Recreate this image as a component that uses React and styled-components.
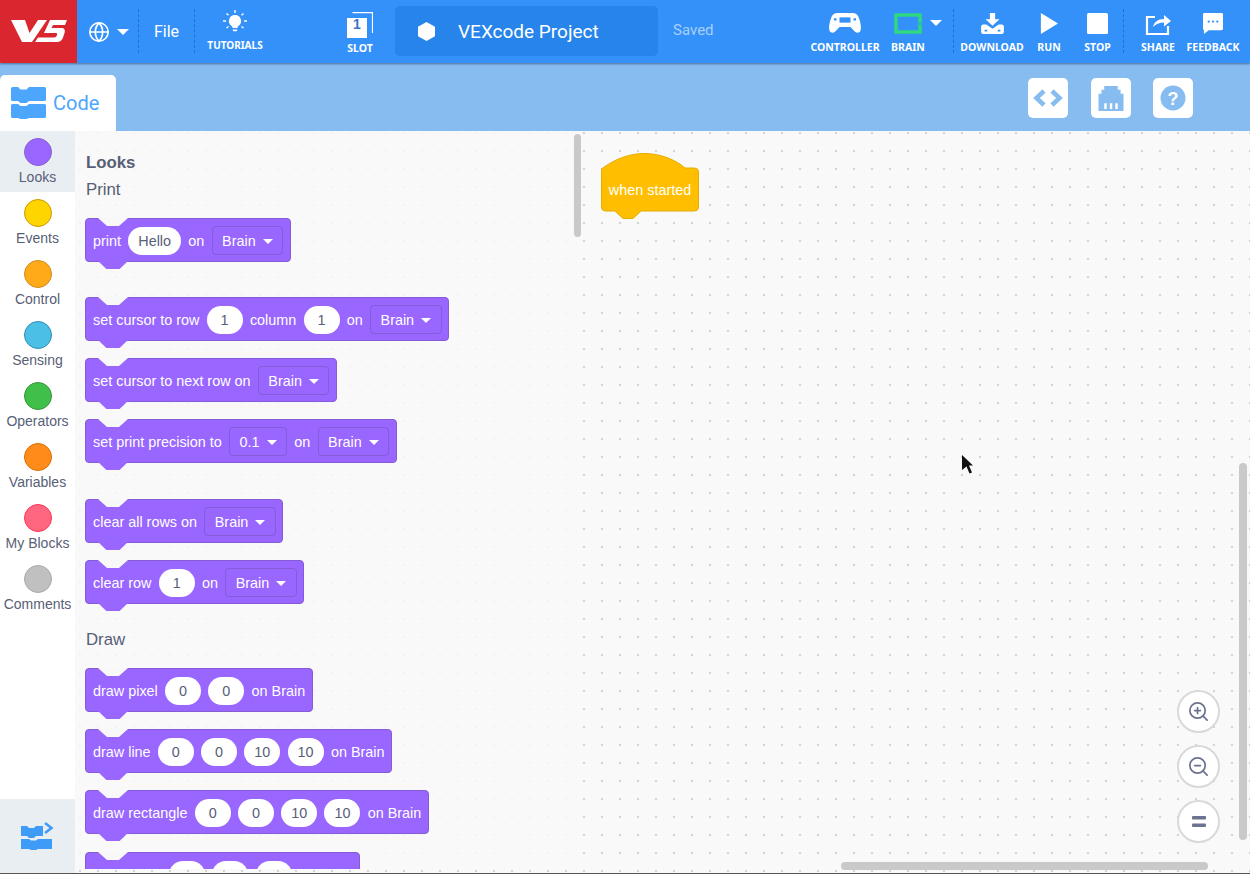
import React from "react";
import styled, { createGlobalStyle } from "styled-components";
import { Globe, ZoomIn, ZoomOut } from "lucide-react";

const GlobalStyle = createGlobalStyle`
  html, body {
    margin: 0;
    padding: 0;
    background: #f9f9f9;
  }
  * {
    box-sizing: border-box;
  }
`;

const Page = styled.div`
  width: 1250px;
  height: 874px;
  display: flex;
  flex-direction: column;
  overflow: hidden;
  font-family: "Liberation Sans", Arial, sans-serif;
  border-bottom: 1px solid #555;
`;

const Header = styled.header`
  height: 63px;
  flex: none;
  display: flex;
  align-items: stretch;
  background: #3391f9;
  color: #fff;
  position: relative;
  z-index: 2;
  box-shadow: 0 1px 2px rgba(40, 60, 90, 0.6);
`;

const Logo = styled.div`
  width: 77px;
  background: #da262e;
  display: flex;
`;

const LangMenu = styled.div`
  width: 61px;
  display: flex;
  align-items: center;
  padding-left: 11px;
  gap: 7px;
`;

const Caret = styled.span`
  display: block;
  width: 0;
  height: 0;
  border-left: 6px solid transparent;
  border-right: 6px solid transparent;
  border-top: 6px solid ${(p) => p.$color || "#fff"};
  margin-left: ${(p) => p.$left || 0}px;
  margin-right: ${(p) => p.$right || 0}px;
  margin-top: ${(p) => p.$top || 0}px;
`;

const Sep = styled.div`
  width: 1px;
  flex: none;
  margin: 9px ${(p) => p.$after || 0}px 10px 0;
  border-left: 1px dashed #2271c9;
`;

const FileMenu = styled.div`
  width: 55px;
  display: flex;
  align-items: center;
  justify-content: center;
  font-family: Roboto, sans-serif;
  font-size: 16px;
  padding-bottom: 1px;
`;

const ToolItem = styled.div`
  width: ${(p) => p.$w}px;
  flex: none;
  display: flex;
  flex-direction: column;
  align-items: center;
  justify-content: flex-end;
  padding-bottom: ${(p) => p.$pb ?? 10}px;
  margin-left: ${(p) => p.$left || 0}px;
  svg {
    flex: none;
  }
`;

const ToolLabel = styled.span`
  font-family: "Noto Sans", "Open Sans", sans-serif;
  font-weight: 700;
  font-size: ${(p) => p.$size || 10.5}px;
  line-height: 12px;
  margin-top: ${(p) => p.$gap ?? 7}px;
  white-space: nowrap;
`;

const ProjectBox = styled.div`
  width: 263px;
  height: 50px;
  margin: 6px 0 0 5px;
  background: #2684ea;
  border-radius: 5px;
  display: flex;
  align-items: center;
  padding-left: 23px;
  gap: 23px;
  font-family: Roboto, sans-serif;
  font-size: 19px;
`;

const SavedText = styled.div`
  margin-left: 15px;
  display: flex;
  align-items: center;
  padding-bottom: 3px;
  font-family: Roboto, sans-serif;
  font-size: 15px;
  color: #a8cffa;
`;

const RightTools = styled.div`
  margin-left: auto;
  padding-right: 16px;
  display: flex;
  align-items: stretch;
`;

const TabBar = styled.div`
  height: 68px;
  flex: none;
  display: flex;
  align-items: flex-end;
  background: #87bcf0;
`;

const CodeTab = styled.div`
  width: 116px;
  height: 56px;
  background: #fff;
  border-radius: 5px 5px 0 0;
  display: flex;
  align-items: center;
  padding-left: 11px;
  gap: 7px;
  font-family: Roboto, sans-serif;
  font-size: 20px;
  color: #4ca6fc;
`;

const TabActions = styled.div`
  margin-left: auto;
  align-self: flex-start;
  margin-top: 15px;
  padding-right: 57px;
  display: flex;
  gap: 22px;
  & > :first-child {
    margin-right: 1px;
  }
`;

const ActionButton = styled.div`
  width: 40px;
  height: 40px;
  background: #fff;
  border-radius: 5px;
  display: flex;
  align-items: center;
  justify-content: center;
`;

const Body = styled.div`
  flex: 1;
  min-height: 0;
  display: flex;
`;

const Sidebar = styled.nav`
  width: 75px;
  flex: none;
  background: #fff;
  display: flex;
  flex-direction: column;
  position: relative;
  z-index: 1;
`;

const CategoryItem = styled.div`
  height: 61px;
  flex: none;
  display: flex;
  flex-direction: column;
  align-items: center;
  padding-top: 7px;
  background: ${(p) => (p.$active ? "#e9eef2" : "transparent")};
  color: #575e75;
  font-size: 14px;
  line-height: 16px;
`;

const CategoryDot = styled.span`
  width: 28px;
  height: 28px;
  margin-bottom: 3px;
  border-radius: 50%;
  background: ${(p) => p.$color};
  border: 1px solid ${(p) => p.$border};
`;

const ExtensionButton = styled.div`
  margin-top: auto;
  height: 74px;
  background: #e9eef2;
  display: flex;
  align-items: center;
  justify-content: center;
`;

const Workspace = styled.main`
  flex: 1;
  min-width: 0;
  position: relative;
  overflow: hidden;
  background-color: #f9f9f9;
  background-image: radial-gradient(circle, #d4d4d4 1.2px, transparent 1.6px);
  background-size: 18px 18px;
  background-position: -4px -7px;
`;

const Palette = styled.section`
  position: absolute;
  left: 0;
  top: 0;
  bottom: 4px;
  width: 505px;
  overflow: hidden;
  background: rgba(249, 249, 249, 0.8);
  padding: 23px 0 0 10px;
  color: #575e75;
`;

const PaletteTitle = styled.div`
  font-size: 16.8px;
  font-weight: 700;
  line-height: 18px;
  margin: 0 0 9px 1px;
`;

const GroupLabel = styled.div`
  font-size: 16.8px;
  line-height: 18px;
  margin: 0 0 ${(p) => p.$gap}px 1px;
`;

const Block = styled.div`
  position: relative;
  width: max-content;
  height: 44px;
  margin-bottom: ${(p) => p.$gap ?? 17}px;
  padding: 1px 6.5px 0 7px;
  display: flex;
  align-items: center;
  gap: 7.25px;
  background: #9966ff;
  border: 1px solid #855cd6;
  border-radius: 4px;
  color: #fff;
  font-size: 14.4px;
  white-space: nowrap;

  &::before,
  &::after {
    content: "";
    position: absolute;
    left: 12px;
    width: 30px;
    height: 8px;
  }
  &::before {
    top: -1px;
    background: #f8f8f8;
    clip-path: polygon(0 0, 100% 0, 70% 100%, 30% 100%);
  }
  &::after {
    bottom: -8px;
    background: #9966ff;
    clip-path: polygon(0 0, 100% 0, 72% 100%, 28% 100%);
  }
`;

const Pill = styled.span`
  min-width: 36px;
  height: 28px;
  padding: 0 10px;
  border-radius: 14px;
  background: #fff;
  color: #575e75;
  display: flex;
  align-items: center;
  justify-content: center;
`;

const Dropdown = styled.span`
  height: 29px;
  padding: 0 9.5px;
  border: 1px solid #855cd6;
  border-radius: 4px;
  display: flex;
  align-items: center;
  gap: 7px;
`;

const SmallCaret = styled.span`
  width: 0;
  height: 0;
  border-left: 5px solid transparent;
  border-right: 5px solid transparent;
  border-top: 5px solid #fff;
  margin-top: 2px;
`;

const HatBlock = styled.div`
  position: absolute;
  left: 526px;
  top: 22px;
  width: 98px;
  height: 66px;
  color: #fff;
  font-size: 14.4px;
  svg {
    position: absolute;
    left: 0;
    top: 0;
  }
  span {
    position: absolute;
    left: 0;
    right: 0;
    top: 29px;
    text-align: center;
    line-height: 16px;
  }
`;

const ScrollThumb = styled.div`
  position: absolute;
  background: #c9c9c9;
  border-radius: 4px;
  left: ${(p) => p.$x}px;
  top: ${(p) => p.$y}px;
  width: ${(p) => p.$w}px;
  height: ${(p) => p.$h}px;
`;

const ZoomStack = styled.div`
  position: absolute;
  left: 1102px;
  top: 559px;
  display: flex;
  flex-direction: column;
  gap: 12px;
`;

const ZoomButton = styled.div`
  width: 43px;
  height: 43px;
  border-radius: 50%;
  background: #fff;
  border: 2px solid #d9d9d9;
  display: flex;
  align-items: center;
  justify-content: center;
  color: #6c7290;
`;

const Pointer = styled.svg`
  position: absolute;
  left: 887px;
  top: 324px;
`;

const categories = [
  ["Looks", "#9966ff", "#855cd6"],
  ["Events", "#ffd500", "#cc9900"],
  ["Control", "#ffab19", "#cf8b17"],
  ["Sensing", "#4cbfe6", "#2e8eb8"],
  ["Operators", "#40bf4a", "#389438"],
  ["Variables", "#ff8c1a", "#db6e00"],
  ["My Blocks", "#ff6680", "#ff3355"],
  ["Comments", "#c0c0c0", "#a8a8a8"],
];

function BrainDrop({ value = "Brain" }) {
  return (
    <Dropdown>
      {value}
      <SmallCaret />
    </Dropdown>
  );
}

function TwoBlocksIcon() {
  return (
    <svg width="35" height="32" viewBox="0 0 35 32" fill="#4ca6fc">
      <path d="M1.5 0H7l2.5 2.5h6L18 0h15.5A1.5 1.5 0 0 1 35 1.5v11a1.5 1.5 0 0 1-1.5 1.5H18l-2.5 2h-6L7 14H1.5A1.5 1.5 0 0 1 0 12.5v-11A1.5 1.5 0 0 1 1.5 0z" />
      <path d="M1.5 17H7l2.5 2h6l2.500-2h15.500a1.500 1.500 0 0 1 1.500 1.500v11a1.500 1.500 0 0 1-1.500 1.500H18l-2.500 1h-6L7 31H1.500A1.500 1.500 0 0 1 0 29.500v-11A1.500 1.500 0 0 1 1.500 17z" />
    </svg>
  );
}

export default function App() {
  return (
    <>
      <GlobalStyle />
      <Page>
        <Header>
          <Logo>
            <svg width="77" height="63" viewBox="0 0 77 63" fill="#fff">
              <path d="M11 20h14l4.500 13L38 20h9L32 42H22z" />
              <path d="M50 20h17l-2 5H53l-1.500 3H61c3.500 0 4.500 2 3.500 5L63 37.500c-1 3-3 4.500-6.500 4.500H35l3-4.500h16c1.500 0 2.300-.5 2.700-1.700l.3-1.300c.3-1 0-1.500-1-1.500H44z" />
            </svg>
          </Logo>
          <LangMenu>
            <Globe size={22} strokeWidth={1.8} />
            <Caret />
          </LangMenu>
          <Sep />
          <FileMenu>File</FileMenu>
          <Sep />
          <ToolItem $w={80} $pb={12}>
            <svg width="24" height="24" viewBox="0 0 24 24" fill="#fff">
              <path d="M12 5a6 6 0 0 0-3.500 10.900c.6.500 1 1.100 1 1.800V18h5v-.3c0-.7.4-1.300 1-1.800A6 6 0 0 0 12 5z" />
              <path d="M9.500 19.500h5l-.8 1.700h-3.400z" />
              <path d="M12 0v3M3.500 3.500l2 1.800M20.500 3.500l-2 1.800M0 11h3M21 11h3M3.500 18l2-1.500M20.500 18l-2-1.500" stroke="#fff" strokeWidth="1.400" />
            </svg>
            <ToolLabel $size={10} $gap={5}>TUTORIALS</ToolLabel>
          </ToolItem>
          <ToolItem $w={60} $left={55} $pb={9}>
            <svg width="26" height="26" viewBox="0 0 26 26">
              <path d="M5.500.6h20v20.500" fill="none" stroke="#fff" strokeWidth="1.200" />
              <path d="M0 6h20v20H0z" fill="#fff" />
              <text x="10" y="17" textAnchor="middle" fontFamily="Liberation Sans" fontWeight="700" fontSize="14" fill="#3a75c4">1</text>
            </svg>
            <ToolLabel $gap={4}>SLOT</ToolLabel>
          </ToolItem>
          <ProjectBox>
            <svg width="17" height="19" viewBox="0 0 17 19" fill="#fff">
              <path d="M8.500 0l8.500 4.800v9.400L8.500 19 0 14.200V4.800z" />
            </svg>
            VEXcode Project
          </ProjectBox>
          <SavedText>Saved</SavedText>
          <RightTools>
            <ToolItem $w={74}>
              <svg width="32" height="21" viewBox="0 0 32 24" preserveAspectRatio="none" fill="#fff">
                <path d="M9 0h14c4 0 6 2 7 6 1.500 5 2.500 10 1.500 14-.5 2.500-3.500 3.500-5.500 1.500L21.500 16h-11L6 21.500c-2 2-5 1-5.500-1.500C-.5 16 .5 11 2 6c1-4 3-6 7-6z" />
                <path d="M10.500 5h11v6h-11z" fill="#3391f9" />
                <path d="M5 6h2.500v2.500H5zM24.500 6H27v2.500h-2.500z" fill="#3391f9" />
              </svg>
              <ToolLabel>CONTROLLER</ToolLabel>
            </ToolItem>
            <ToolItem $w={52}>
              <svg width="28" height="21" viewBox="0 0 28 21">
                <path d="M2 2h24v17H2z" fill="none" stroke="#2fd77f" strokeWidth="3.500" />
                <rect x="25.400" y="9" width="1.200" height="3" fill="#3391f9" />
              </svg>
              <ToolLabel>BRAIN</ToolLabel>
            </ToolItem>
            <Caret $left={-4} $right={11} $top={20} />
            <Sep $after={4} />
            <ToolItem $w={68}>
              <svg width="25" height="21" viewBox="0 0 26 24" fill="#fff">
                <path d="M10 0h6v7h5l-8 7.500L5 7h5z" />
                <path d="M2.500 13H6l7 5 7-5h3.500a2.500 2.500 0 0 1 2.500 2.500v6a2.500 2.500 0 0 1-2.500 2.500h-21A2.500 2.500 0 0 1 0 21.500v-6A2.500 2.500 0 0 1 2.500 13z" />
                <path d="M4 19h3v2H4zM19 19h3v2h-3z" fill="#3391f9" />
              </svg>
              <ToolLabel>DOWNLOAD</ToolLabel>
            </ToolItem>
            <ToolItem $w={46}>
              <svg width="18" height="21" viewBox="0 0 20 22" preserveAspectRatio="none" fill="#fff">
                <path d="M1 0l19 11L1 22z" />
              </svg>
              <ToolLabel>RUN</ToolLabel>
            </ToolItem>
            <ToolItem $w={51}>
              <svg width="21" height="21" viewBox="0 0 21 21" fill="#fff">
                <rect width="21" height="21" rx="1.500" />
              </svg>
              <ToolLabel>STOP</ToolLabel>
            </ToolItem>
            <Sep />
            <ToolItem $w={68}>
              <svg width="27" height="23" viewBox="0 0 27 23" fill="none" stroke="#fff" strokeWidth="2.200">
                <path d="M10 5H2v17h21v-8" />
                <path d="M8 15c1-5 5-8 11-8V3l7 6-7 5.500V10.500c-5 0-8 1.500-11 4.500z" fill="#fff" stroke="none" />
              </svg>
              <ToolLabel $gap={6}>SHARE</ToolLabel>
            </ToolItem>
            <ToolItem $w={42}>
              <svg width="20" height="21" viewBox="0 0 21 22" fill="#fff">
                <path d="M1.500 0h18A1.500 1.500 0 0 1 21 1.500v15a1.500 1.500 0 0 1-1.500 1.500H6l-5 4V18H1.500A1.500 1.500 0 0 1 0 16.500v-15A1.500 1.500 0 0 1 1.500 0z" />
                <circle cx="6" cy="9" r="1.200" fill="#3391f9" />
                <circle cx="10.500" cy="9" r="1.200" fill="#3391f9" />
                <circle cx="15" cy="9" r="1.200" fill="#3391f9" />
              </svg>
              <ToolLabel>FEEDBACK</ToolLabel>
            </ToolItem>
          </RightTools>
        </Header>

        <TabBar>
          <CodeTab>
            <TwoBlocksIcon />
            Code
          </CodeTab>
          <TabActions>
            <ActionButton>
              <svg width="30" height="18" viewBox="0 0 30 18" fill="none" stroke="#87bcf0" strokeWidth="4.500">
                <path d="M11 2L3.500 9l7.500 7M19 2l7.500 7-7.500 7" />
              </svg>
            </ActionButton>
            <ActionButton>
              <svg width="26" height="25" viewBox="0 0 26 26" fill="#87bcf0">
                <path d="M6 0h14v4h3v4h3v18H0V8h3V4h3z" />
                <path d="M6 18h2.500v6H6zM11.800 18h2.500v6h-2.500zM17.500 18H20v6h-2.500z" fill="#fff" />
              </svg>
            </ActionButton>
            <ActionButton>
              <svg width="26" height="26" viewBox="0 0 26 26">
                <circle cx="13" cy="13" r="12.500" fill="#87bcf0" />
                <text x="13" y="19.500" textAnchor="middle" fontFamily="Liberation Sans" fontWeight="700" fontSize="18" fill="#fff">?</text>
              </svg>
            </ActionButton>
          </TabActions>
        </TabBar>

        <Body>
          <Sidebar>
            {categories.map(([name, color, border], i) => (
              <CategoryItem key={name} $active={i === 0}>
                <CategoryDot $color={color} $border={border} />
                {name}
              </CategoryItem>
            ))}
            <ExtensionButton>
              <svg width="33" height="28" viewBox="0 0 33 28" fill="#3f9bf8">
                <path d="M0 4h6l2 2h5l2-2h7v10h-7l-2 2H8l-2-2H0z" />
                <path d="M0 17h8l2 1.500h5l2-1.500h14v10H17l-2 1h-5l-2-1H0z" />
                <path d="M24 1l6.500 5L24 11" fill="none" stroke="#3f9bf8" strokeWidth="2.500" />
              </svg>
            </ExtensionButton>
          </Sidebar>

          <Workspace>
            <HatBlock>
              <svg width="98" height="66" viewBox="0 0 98 66">
                <path
                  d="M.5 16C15 5 30 .5 43 .5 60 .5 75 7 84 15h9.500a4 4 0 0 1 4 4v35a4 4 0 0 1-4 4H40l-8 7.500H22L14 58H4.500a4 4 0 0 1-4-4z"
                  fill="#ffbf00"
                  stroke="#e6ac00"
                />
              </svg>
              <span>when started</span>
            </HatBlock>

            <Pointer width="12" height="19" viewBox="0 0 12 19">
              <path d="M0 0l11 10.500H7l3 7-2.500 1-3-7L0 15z" fill="#111" />
            </Pointer>

            <Palette>
              <PaletteTitle>Looks</PaletteTitle>
              <GroupLabel $gap={19}>Print</GroupLabel>
              <Block $gap={35}>
                print <Pill>Hello</Pill> on <BrainDrop />
              </Block>
              <Block>
                set cursor to row <Pill>1</Pill> column <Pill>1</Pill> on <BrainDrop />
              </Block>
              <Block>
                set cursor to next row on <BrainDrop />
              </Block>
              <Block $gap={36}>
                set print precision to <BrainDrop value="0.1" /> on <BrainDrop />
              </Block>
              <Block>
                clear all rows on <BrainDrop />
              </Block>
              <Block $gap={27}>
                clear row <Pill>1</Pill> on <BrainDrop />
              </Block>
              <GroupLabel $gap={19}>Draw</GroupLabel>
              <Block>
                draw pixel <Pill>0</Pill> <Pill>0</Pill> on Brain
              </Block>
              <Block>
                draw line <Pill>0</Pill> <Pill>0</Pill> <Pill>10</Pill> <Pill>10</Pill> on Brain
              </Block>
              <Block $gap={18}>
                draw rectangle <Pill>0</Pill> <Pill>0</Pill> <Pill>10</Pill> <Pill>10</Pill> on Brain
              </Block>
              <Block>
                draw circle <Pill>0</Pill> <Pill>0</Pill> <Pill>10</Pill> on Brain
              </Block>
            </Palette>

            <ScrollThumb $x={499} $y={3} $w={7} $h={103} />
            <ScrollThumb $x={1164} $y={332} $w={8} $h={377} />
            <ScrollThumb $x={766} $y={731} $w={367} $h={8} />

            <ZoomStack>
              <ZoomButton>
                <ZoomIn size={23} strokeWidth={1.8} />
              </ZoomButton>
              <ZoomButton>
                <ZoomOut size={23} strokeWidth={1.8} />
              </ZoomButton>
              <ZoomButton>
                <svg width="14" height="12" viewBox="0 0 14 12" fill="#6c7290">
                  <rect width="14" height="3.500" rx="1" />
                  <rect y="7.500" width="14" height="3.500" rx="1" />
                </svg>
              </ZoomButton>
            </ZoomStack>
          </Workspace>
        </Body>
      </Page>
    </>
  );
}
